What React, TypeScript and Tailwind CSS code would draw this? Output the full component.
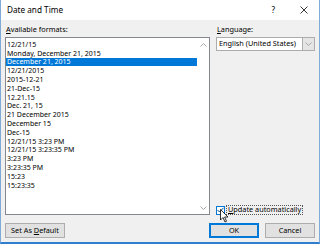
const FORMATS = [
  '12/21/15',
  'Monday, December 21, 2015',
  'December 21, 2015',
  '12/21/2015',
  '2015-12-21',
  '21-Dec-15',
  '12.21.15',
  'Dec. 21, 15',
  '21 December 2015',
  'December 15',
  'Dec-15',
  '12/21/15 3:23 PM',
  '12/21/15 3:23:35 PM',
  '3:23 PM',
  '3:23:35 PM',
  '15:23',
  '15:23:35',
];

const SELECTED = 2;

function Chevron({ up }: { up?: boolean }) {
  return (
    <svg width="7" height="4" viewBox="0 0 7 4" className="block">
      <path
        d={up ? 'M0.5 3.5 L3.5 0.5 L6.5 3.5' : 'M0.5 0.5 L3.5 3.5 L6.5 0.5'}
        fill="none"
        stroke="#a6a6a6"
        strokeWidth="1"
      />
    </svg>
  );
}

export default function App() {
  return (
    <div
      className="relative w-[320px] h-[244px] flex flex-col overflow-hidden border-l border-r border-[#7fa9d6] border-b-2 border-b-[#2f7fd0] text-[#000] leading-none whitespace-nowrap"
      style={{ fontFamily: '"Noto Sans", "Open Sans", sans-serif' }}
    >
      {/* title bar */}
      <div className="h-[20px] bg-white flex items-center pl-[6px] pr-[11px] text-[8.2px]">
        <span className="flex-1">Date and Time</span>
        <span className="mr-[25px]">?</span>
        <svg width="8" height="8" viewBox="0 0 8 8">
          <path d="M0.5 0.5 L7.5 7.5 M7.5 0.5 L0.5 7.5" stroke="#000" strokeWidth="0.8" />
        </svg>
      </div>

      <div className="flex-1 bg-[#f0f0f0] flex flex-col pl-[4px] pr-[4px] pt-[6px]">
        <div className="flex gap-[6px]">
          {/* left column */}
          <div className="w-[205px] flex flex-col">
            <div className="h-[11px] text-[7.3px] pl-[1px]">
              <u>A</u>vailable formats:
            </div>
            <div className="h-[178px] bg-white border border-[#828790] flex">
              <div className="flex-1 flex flex-col pt-[2px] text-[7px]">
                {FORMATS.map((f, i) => (
                  <div
                    key={f}
                    className={
                      i === SELECTED
                        ? 'h-[8.8px] flex items-center pl-[1px] bg-[#0078d7] text-white'
                        : 'h-[8.8px] flex items-center pl-[1px]'
                    }
                  >
                    {f}
                  </div>
                ))}
              </div>
              <div className="w-[12px] flex flex-col items-center justify-between pt-[5px] pb-[4px]">
                <Chevron up />
                <Chevron />
              </div>
            </div>
          </div>

          {/* right column */}
          <div className="flex-1 flex flex-col">
            <div className="h-[11px] text-[7.3px] pl-[1px]">
              <u>L</u>anguage:
            </div>
            <div className="h-[14px] bg-white border border-[#acacac] flex items-stretch">
              <div className="flex-1 flex items-center pl-[2px] text-[7.3px]">English (United States)</div>
              <div className="w-[12px] bg-[#e5e5e5] border-l border-[#acacac] flex items-center justify-center">
                <Chevron />
              </div>
            </div>
            <div className="flex-1" />
            <div className="flex items-center gap-[1px]">
              <div className="w-[9px] h-[9px] bg-white border border-[#0078d7] flex items-center justify-center">
                <svg width="7" height="6" viewBox="0 0 7 6">
                  <path d="M0.5 3 L2.5 5 L6.5 0.8" fill="none" stroke="#0a4a86" strokeWidth="1" />
                </svg>
              </div>
              <div className="border border-dotted border-[#555] px-[1px] h-[10px] flex items-center text-[7.3px]">
                <span>
                  <u>U</u>pdate automatically
                </span>
              </div>
            </div>
          </div>
        </div>

        {/* buttons */}
        <div className="flex mt-[8px]">
          <button className="w-[60px] h-[15px] bg-[#e1e1e1] border border-[#adadad] text-[7.3px] flex items-center justify-center">
            <span>
              Set As <u>D</u>efault
            </span>
          </button>
          <div className="flex-1" />
          <button className="w-[50px] h-[15px] bg-[#e1e1e1] border-2 border-[#0078d7] text-[7.3px] flex items-center justify-center">
            OK
          </button>
          <button className="w-[50px] h-[15px] ml-[6px] bg-[#e1e1e1] border border-[#adadad] text-[7.3px] flex items-center justify-center">
            Cancel
          </button>
        </div>
      </div>

      {/* mouse pointer */}
      <svg
        className="absolute left-[219px] top-[209px]"
        width="9"
        height="14"
        viewBox="0 0 9 14"
      >
        <path d="M0.5 0.5 L0.5 11 L3 8.5 L5 13 L6.5 12.3 L4.6 8 L8 8 Z" fill="#fff" stroke="#000" strokeWidth="0.8" />
      </svg>
    </div>
  );
}
